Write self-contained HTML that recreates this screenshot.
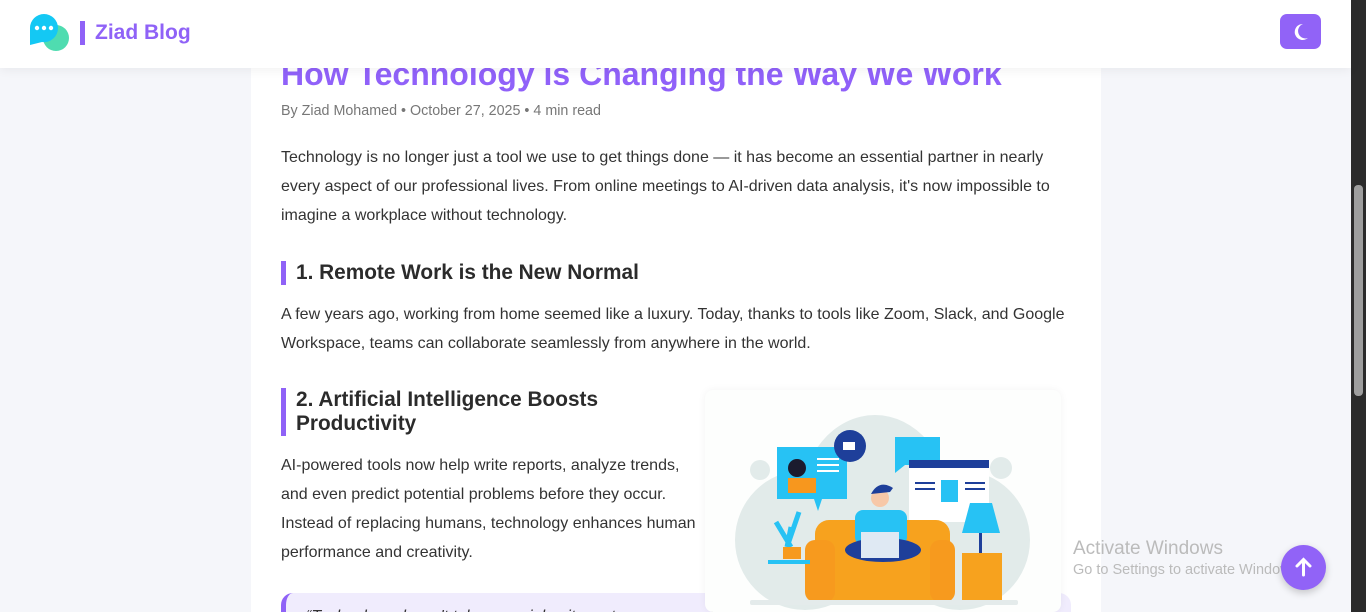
<!DOCTYPE html>
<html><head><meta charset="utf-8"><style>
*{margin:0;padding:0;box-sizing:border-box}
html,body{width:1366px;height:612px;overflow:hidden}
body{background:#f5f6fa;font-family:"Liberation Sans",sans-serif;position:relative}
.hdr{position:absolute;left:0;top:0;width:1351px;height:68px;background:#fff;box-shadow:0 2px 10px rgba(0,0,0,.06);z-index:5}
.brand{position:absolute;left:95px;top:21px;font-size:21px;font-weight:bold;color:#8f62f7}
.bar{position:absolute;left:80px;top:21px;width:5px;height:24px;background:#8f62f7}
.moon{position:absolute;left:1280px;top:14px;width:41px;height:35px;border-radius:7px;background:#9163f7}
.art{position:absolute;left:251px;top:0;width:850px;height:612px;background:#fff}
h1{position:absolute;left:281px;top:56px;font-size:32px;color:#9061f9;white-space:nowrap}
.meta{position:absolute;left:281px;top:103px;font-size:14.3px;color:#777}
p{position:absolute;left:281px;font-size:16px;line-height:29px;color:#333}
h2{position:absolute;left:281px;border-left:5px solid #8f62f7;padding-left:10px;font-size:20.8px;color:#2b2b2b;line-height:24px}
.img{position:absolute;left:705px;top:390px;width:356px;height:222px;background:#fdfefd;border-radius:8px;box-shadow:0 0 8px rgba(0,0,0,.05);z-index:2}
.quote{position:absolute;left:281px;top:593px;width:790px;height:40px;background:#f0ecfd;border-left:5px solid #8f62f7;border-radius:12px;padding:15px 20px;font-style:italic;font-size:16px;color:#333}
.sb{position:absolute;left:1351px;top:0;width:15px;height:612px;background:#2b2b2b}
.thumb{position:absolute;left:1354px;top:185px;width:9px;height:211px;background:#9e9e9e;border-radius:4px}
.up{position:absolute;left:1281px;top:545px;width:45px;height:45px;border-radius:50%;background:#9163f7;box-shadow:0 3px 8px rgba(0,0,0,.2);z-index:4}
.win{position:absolute;left:1073px;top:538px;color:#bbb;font-size:19px;z-index:3;white-space:nowrap}
.win small{display:block;font-size:14.5px;margin-top:2px}
</style></head><body>
<div class="art"></div>
<h1>How Technology is Changing the Way We Work</h1>
<div class="meta">By Ziad Mohamed • October 27, 2025 • 4 min read</div>
<p style="top:143px;width:790px">Technology is no longer just a tool we use to get things done — it has become an essential partner in nearly every aspect of our professional lives. From online meetings to AI-driven data analysis, it's now impossible to imagine a workplace without technology.</p>
<h2 style="top:261px">1. Remote Work is the New Normal</h2>
<p style="top:300px;width:790px">A few years ago, working from home seemed like a luxury. Today, thanks to tools like Zoom, Slack, and Google Workspace, teams can collaborate seamlessly from anywhere in the world.</p>
<h2 style="top:388px;width:360px">2. Artificial Intelligence Boosts Productivity</h2>
<p style="top:451px;width:420px">AI-powered tools now help write reports, analyze trends, and even predict potential problems before they occur. Instead of replacing humans, technology enhances human performance and creativity.</p>
<div class="quote">“Technology doesn't take away jobs; it creates new ones.”</div>
<div class="img"><svg width="356" height="222" viewBox="0 0 356 222">
<ellipse cx="170" cy="115" rx="75" ry="90" fill="#e2ebea"/><circle cx="100" cy="150" r="70" fill="#e2ebea"/><circle cx="255" cy="150" r="70" fill="#e2ebea"/>
<circle cx="55" cy="80" r="10" fill="#e2ebea"/><circle cx="296" cy="78" r="11" fill="#e2ebea"/><circle cx="208" cy="50" r="6" fill="#e2ebea"/>
<path d="M72 57h70v52h-25l-4 12-4-12h-37z" fill="#27c2f4"/><circle cx="92" cy="78" r="9" fill="#1b1b2e"/><rect x="83" y="88" width="28" height="15" fill="#f7971e"/>
<rect x="112" y="68" width="22" height="2" fill="#fff"/><rect x="112" y="74" width="22" height="2" fill="#fff"/><rect x="112" y="80" width="22" height="2" fill="#fff"/>
<circle cx="145" cy="56" r="16" fill="#1e3f9a"/><rect x="138" y="52" width="12" height="8" fill="#fff"/>
<path d="M190 47h45v28h-35l-10 8z" fill="#27c2f4"/>
<rect x="204" y="72" width="80" height="60" fill="#fff"/><rect x="204" y="70" width="80" height="8" fill="#1e3f9a"/><rect x="236" y="90" width="17" height="22" fill="#27c2f4"/>
<rect x="210" y="92" width="20" height="2" fill="#1e3f9a"/><rect x="210" y="98" width="20" height="2" fill="#1e3f9a"/><rect x="260" y="92" width="20" height="2" fill="#1e3f9a"/><rect x="260" y="98" width="20" height="2" fill="#1e3f9a"/>
<rect x="110" y="130" width="135" height="85" rx="14" fill="#f7a21e"/><rect x="100" y="150" width="30" height="62" rx="10" fill="#f79a1e"/><rect x="225" y="150" width="25" height="62" rx="10" fill="#f79a1e"/>
<rect x="150" y="120" width="52" height="35" rx="8" fill="#27c2f4"/><circle cx="175" cy="108" r="9" fill="#f7c8a8"/><path d="M166 104q8-15 22-6l-3 4z" fill="#1e3f9a"/>
<ellipse cx="178" cy="160" rx="38" ry="12" fill="#1e3f9a"/><rect x="156" y="142" width="38" height="26" fill="#dfe9f3"/>
<rect x="257" y="163" width="40" height="50" fill="#f7a21e"/><path d="M265 113h22l8 30h-38z" fill="#27c2f4"/><rect x="274" y="143" width="3" height="20" fill="#1e3f9a"/>
<path d="M86 137l-4 20M82 157l12-35M86 157l-15-25" stroke="#27c2f4" stroke-width="5"/><rect x="78" y="157" width="18" height="12" fill="#f79a1e"/>
<rect x="63" y="170" width="42" height="4" fill="#27c2f4"/><rect x="45" y="210" width="268" height="5" rx="2" fill="#e4ebeb"/>
</svg></div>
<div class="hdr">
<svg style="position:absolute;left:29px;top:13px" width="42" height="40" viewBox="0 0 42 40"><circle cx="27" cy="25" r="13" fill="#4fdcb0"/><path d="M15 1a14 14 0 0 1 14 14a14 14 0 0 1-16 14l-12 3v-17a14 14 0 0 1 14-14z" fill="#14c8f4"/><circle cx="8" cy="15" r="2.2" fill="#fff"/><circle cx="15" cy="15" r="2.2" fill="#fff"/><circle cx="22" cy="15" r="2.2" fill="#fff"/></svg>
<div class="bar"></div><div class="brand">Ziad Blog</div>
<div class="moon"><svg width="41" height="35" viewBox="0 0 41 35"><path d="M23 10a8 8 0 1 0 5 14a7 7 0 0 1-5-14z" fill="#fff"/></svg></div>
</div>
<div class="win">Activate Windows<small>Go to Settings to activate Windows.</small></div>
<div class="up"><svg width="45" height="45" viewBox="0 0 45 45"><path d="M22.5 30V15M16 21l6.5-6.5L29 21" stroke="#fff" stroke-width="3" fill="none" stroke-linecap="round"/></svg></div>
<div class="sb"></div><div class="thumb"></div>
</body></html>
